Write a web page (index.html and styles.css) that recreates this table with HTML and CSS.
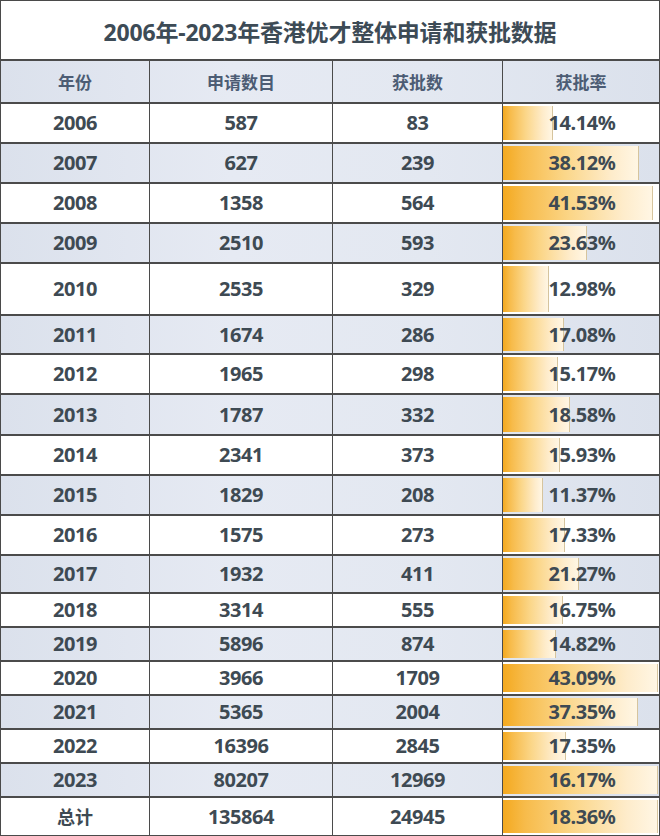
FILE: index.html
```html
<!DOCTYPE html>
<html lang="zh-CN">
<head>
<meta charset="utf-8">
<title>2006年-2023年香港优才整体申请和获批数据</title>
<link rel="stylesheet" href="styles.css">
</head>
<body>
<div class="sheet">
  <div class="title">2006年-2023年香港优才整体申请和获批数据</div>
  <div class="row head">
    <div class="cell">年份</div><div class="cell">申请数目</div><div class="cell">获批数</div><div class="cell">获批率</div>
  </div>
  <div class="row h40"><div class="cell">2006</div><div class="cell">587</div><div class="cell">83</div><div class="cell rate" style="--w:50px">14.14%</div></div>
  <div class="row h40 alt"><div class="cell">2007</div><div class="cell">627</div><div class="cell">239</div><div class="cell rate" style="--w:136px">38.12%</div></div>
  <div class="row h40"><div class="cell">2008</div><div class="cell">1358</div><div class="cell">564</div><div class="cell rate" style="--w:150px">41.53%</div></div>
  <div class="row h40 alt"><div class="cell">2009</div><div class="cell">2510</div><div class="cell">593</div><div class="cell rate" style="--w:84px">23.63%</div></div>
  <div class="row h52"><div class="cell">2010</div><div class="cell">2535</div><div class="cell">329</div><div class="cell rate" style="--w:46px">12.98%</div></div>
  <div class="row h39 alt"><div class="cell">2011</div><div class="cell">1674</div><div class="cell">286</div><div class="cell rate" style="--w:61px">17.08%</div></div>
  <div class="row h40"><div class="cell">2012</div><div class="cell">1965</div><div class="cell">298</div><div class="cell rate" style="--w:55px">15.17%</div></div>
  <div class="row h41 alt"><div class="cell">2013</div><div class="cell">1787</div><div class="cell">332</div><div class="cell rate" style="--w:67px">18.58%</div></div>
  <div class="row h40"><div class="cell">2014</div><div class="cell">2341</div><div class="cell">373</div><div class="cell rate" style="--w:57px">15.93%</div></div>
  <div class="row h40 alt"><div class="cell">2015</div><div class="cell">1829</div><div class="cell">208</div><div class="cell rate" style="--w:40px">11.37%</div></div>
  <div class="row h40"><div class="cell">2016</div><div class="cell">1575</div><div class="cell">273</div><div class="cell rate" style="--w:62px">17.33%</div></div>
  <div class="row h38 alt"><div class="cell">2017</div><div class="cell">1932</div><div class="cell">411</div><div class="cell rate" style="--w:76px">21.27%</div></div>
  <div class="row h34"><div class="cell">2018</div><div class="cell">3314</div><div class="cell">555</div><div class="cell rate" style="--w:60px">16.75%</div></div>
  <div class="row h34 alt"><div class="cell">2019</div><div class="cell">5896</div><div class="cell">874</div><div class="cell rate" style="--w:53px">14.82%</div></div>
  <div class="row h34"><div class="cell">2020</div><div class="cell">3966</div><div class="cell">1709</div><div class="cell rate" style="--w:155px">43.09%</div></div>
  <div class="row h34 alt"><div class="cell">2021</div><div class="cell">5365</div><div class="cell">2004</div><div class="cell rate" style="--w:135px">37.35%</div></div>
  <div class="row h34"><div class="cell">2022</div><div class="cell">16396</div><div class="cell">2845</div><div class="cell rate" style="--w:63px">17.35%</div></div>
  <div class="row h34 alt"><div class="cell">2023</div><div class="cell">80207</div><div class="cell">12969</div><div class="cell rate" style="--w:155px">16.17%</div></div>
  <div class="row total"><div class="cell">总计</div><div class="cell">135864</div><div class="cell">24945</div><div class="cell rate" style="--w:155px">18.36%</div></div>
</div>
</body>
</html>
```
FILE: styles.css
```css
html, body {
  margin: 0;
  padding: 0;
  background: #ffffff;
}

.sheet {
  width: 660px;
  height: 836px;
  box-sizing: border-box;
  border: 1px solid #4a4a4a;
  background: #ffffff;
  display: flex;
  flex-direction: column;
  font-family: "Noto Sans", "Noto Sans CJK SC", sans-serif;
  color: #3e4a53;
  overflow: hidden;
}

.title {
  height: 58px;
  flex: none;
  display: flex;
  align-items: center;
  justify-content: center;
  font-size: 23px;
  font-weight: 700;
  color: #3d4b56;
  letter-spacing: -0.2px;
  padding-top: 2px;
  box-sizing: border-box;
}

.row {
  flex: none;
  display: grid;
  grid-template-columns: 148px 183px 170px 1fr;
  border-top: 2px solid #4b4b4b;
  box-sizing: border-box;
  background: #ffffff;
}

.row.alt,
.row.head {
  background: linear-gradient(to right, #dbe1ec 0%, #e6eaf3 35%, #e3e8f1 65%, #dbe1ec 100%);
}

.head { height: 43px; }
.h34 { height: 34px; }
.h38 { height: 38px; }
.h39 { height: 39px; }
.h40 { height: 40px; }
.h41 { height: 41px; }
.h52 { height: 52px; }
.total { height: 39px; }

.cell {
  display: flex;
  align-items: center;
  justify-content: center;
  font-size: 20px;
  font-weight: 700;
  letter-spacing: -0.4px;
  border-left: 1px solid #4b4b4b;
  padding-bottom: 1px;
  box-sizing: border-box;
}

.cell:first-child {
  border-left: none;
}

.head .cell {
  font-size: 17px;
  color: #4c5c74;
  letter-spacing: 0;
}

.total .cell:first-child {
  font-size: 18px;
  letter-spacing: 0;
}

.rate {
  padding-left: 2px;
  background-image: linear-gradient(to right,
    #f4a91f 0%,
    #f7bb4a 14%,
    #fbd688 45%,
    #feeccb 80%,
    #fff6e4 calc(100% - 1px),
    #d6c49d calc(100% - 1px));
  background-repeat: no-repeat;
  background-position: left center;
  background-size: var(--w) calc(100% - 4px);
}
```
